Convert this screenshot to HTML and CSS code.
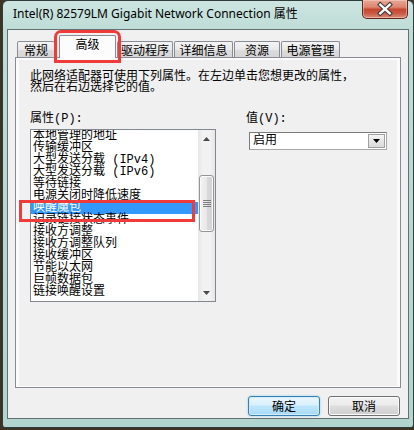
FILE: index.html
```html
<!DOCTYPE html>
<html lang="zh-CN">
<head>
  <meta charset="UTF-8" />
  <title>Intel(R) 82579LM Gigabit Network Connection 属性</title>
  <link rel="stylesheet" href="styles.css">
</head>
<body>

  <div class="window">
    <div class="titlebar">
      <span class="title">Intel(R) 82579LM Gigabit Network Connection 属性</span>
      <button class="close-btn" aria-label="关闭">
        <svg width="46" height="18" viewBox="0 0 46 18">
          <path d="M18 4.5 L28 13.5 M28 4.5 L18 13.5" stroke="#3b3b3b" stroke-width="4.6" stroke-linecap="square" fill="none"/>
          <path d="M18 4.5 L28 13.5 M28 4.5 L18 13.5" stroke="#ffffff" stroke-width="2.4" stroke-linecap="square" fill="none"/>
        </svg>
      </button>
    </div>

    <div class="client">
      <div class="tabs">
        <div class="tab tab-general">常规</div>
        <div class="tab tab-advanced active">高级</div>
        <div class="tab tab-driver">驱动程序</div>
        <div class="tab tab-details">详细信息</div>
        <div class="tab tab-resources">资源</div>
        <div class="tab tab-power">电源管理</div>
      </div>

      <div class="tab-panel">
        <div class="page">
          <p class="desc">此网络适配器可使用下列属性。在左边单击您想更改的属性，<br>然后在右边选择它的值。</p>

          <div class="props">
            <div class="col-left">
              <div class="field-label">属性(P):</div>
              <div class="listbox">
                <ul class="items">
                  <li>本地管理的地址</li>
                  <li>传输缓冲区</li>
                  <li>大型发送分载 (IPv4)</li>
                  <li>大型发送分载 (IPv6)</li>
                  <li>等待链接</li>
                  <li>电源关闭时降低速度</li>
                  <li class="selected">唤醒魔包</li>
                  <li>记录链接状态事件</li>
                  <li>接收方调整</li>
                  <li>接收方调整队列</li>
                  <li>接收缓冲区</li>
                  <li>节能以太网</li>
                  <li>巨帧数据包</li>
                  <li>链接唤醒设置</li>
                </ul>
                <div class="scrollbar">
                  <div class="arrow">
                    <svg width="7" height="4" viewBox="0 0 7 4"><path d="M0 4 L3.5 0 L7 4 Z" fill="#4a4a4a"/></svg>
                  </div>
                  <div class="track">
                    <div class="thumb">
                      <svg width="8" height="8" viewBox="0 0 8 8">
                        <path d="M0 0.5 H8 M0 2.5 H8 M0 4.5 H8 M0 6.5 H8" stroke="#7d7d7d" stroke-width="1"/>
                      </svg>
                    </div>
                  </div>
                  <div class="arrow">
                    <svg width="7" height="4" viewBox="0 0 7 4"><path d="M0 0 L7 0 L3.5 4 Z" fill="#4a4a4a"/></svg>
                  </div>
                </div>
              </div>
            </div>

            <div class="col-right">
              <div class="field-label">值(V):</div>
              <div class="combo">
                <span class="combo-text">启用</span>
                <span class="combo-btn">
                  <svg width="7" height="4" viewBox="0 0 7 4"><path d="M0 0 L7 0 L3.5 4 Z" fill="#000"/></svg>
                </span>
              </div>
            </div>
          </div>

          <div class="mark-item"></div>
        </div>
      </div>

      <div class="actions">
        <button class="btn btn-default">确定</button>
        <button class="btn">取消</button>
      </div>
    </div>
  </div>

</body>
</html>
```

FILE: styles.css
```css
* {
  box-sizing: border-box;
  margin: 0;
  padding: 0;
}

body {
  background-color: #3b3425;
  height: 430px;
  overflow: hidden;
  font-family: "Liberation Mono", "Noto Sans CJK SC", monospace;
  font-size: 12px;
  color: #000;
}

/* window frame */
.window {
  margin-left: 2px;
  width: 412px;
  height: 428px;
  border: 1px solid #2f3c3a;
  border-radius: 6px 6px 3px 3px;
  padding: 0 4px 8px 4px;
  background: linear-gradient(180deg, #cde5e1 0, #bddcd6 30px, #b2d5cf 100%);
}

.titlebar {
  height: 28px;
  display: flex;
  justify-content: space-between;
  align-items: flex-start;
}

.title {
  padding: 5px 0 0 6px;
  font-family: "Noto Sans", "Noto Sans CJK SC", sans-serif;
  font-size: 12px;
  line-height: 16px;
  color: #000;
}

.close-btn {
  width: 46px;
  height: 19px;
  margin: -1px 1px 0 0;
  border: 1px solid #5b2a22;
  border-top: none;
  border-radius: 0 0 5px 5px;
  background: linear-gradient(180deg, #e9a896 0, #dd8470 40%, #c6472f 52%, #c95a45 75%, #de8f7c 100%);
  box-shadow: inset 0 0 0 1px rgba(255, 220, 210, 0.45);
  display: flex;
  align-items: center;
  justify-content: center;
}

.close-btn svg {
  display: block;
}

.client {
  height: 390px;
  border: 1px solid #62716f;
  background-color: #f0f0f0;
  padding: 0 7px 0 7px;
}

/* tabs */
.tabs {
  height: 27px;
  display: flex;
  align-items: flex-end;
  gap: 1px;
  padding-left: 2px;
}

.tab {
  height: 16px;
  padding-top: 1px;
  border: 1px solid #898c95;
  border-bottom: none;
  border-radius: 2px 2px 0 0;
  background: linear-gradient(180deg, #f4f4f4 0, #e9e9e9 50%, #dcdcdc 51%, #d6d6d6 100%);
  font-family: "Noto Sans CJK SC", sans-serif;
  font-size: 12px;
  line-height: 14px;
  text-align: center;
}

.tab.active {
  position: relative;
  z-index: 1;
  height: 23px;
  margin-bottom: -1px;
  margin-left: 3px;
  background: #fcfcfc;
  outline: 3px solid #f03b3b;
  outline-offset: 2px;
}

.tab-general { width: 38px; }
.tab-advanced { width: 57px; }
.tab-driver { width: 56px; }
.tab-details { width: 59px; }
.tab-resources { width: 46px; }
.tab-power { width: 59px; }

.tab-panel {
  height: 331px;
  border: 1px solid #898c95;
  background-color: #fbfbfb;
  padding: 2px 3px 1px 3px;
}

.page {
  position: relative;
  height: 100%;
  background-color: #f0f0f0;
  padding: 12px 0 0 11px;
}

.desc {
  line-height: 11px;
}

.props {
  display: flex;
  gap: 30px;
  margin-top: 19px;
}

.field-label {
  line-height: 13px;
  height: 13px;
}

.col-left {
  width: 186px;
}

.listbox {
  margin-top: 3px;
  height: 173px;
  border: 1px solid #828790;
  background-color: #fff;
  display: flex;
}

.items {
  flex: 1;
  list-style: none;
  overflow: hidden;
}

.items li {
  height: 12px;
  line-height: 12px;
  padding-left: 2px;
  white-space: nowrap;
}

.items li.selected {
  background-color: #3399ff;
  color: #fff;
}

.scrollbar {
  width: 17px;
  display: flex;
  flex-direction: column;
  background: linear-gradient(90deg, #e6e6e6 0, #f2f2f2 30%, #f2f2f2 70%, #e6e6e6 100%);
}

.arrow {
  height: 17px;
  display: flex;
  align-items: center;
  justify-content: center;
}

.arrow svg,
.thumb svg,
.combo-btn svg {
  display: block;
}

.track {
  flex: 1;
}

.thumb {
  margin: 28px 1px 0 1px;
  height: 57px;
  border: 1px solid #959595;
  border-radius: 3px;
  background: linear-gradient(90deg, #f3f3f3 0, #e8e8e8 50%, #d9d9d9 51%, #d3d3d3 100%);
  box-shadow: inset 0 0 0 1px #fafafa;
  display: flex;
  align-items: center;
  justify-content: center;
}

.col-right {
  width: 141px;
}

.combo {
  margin: 6px 0 0 3px;
  width: 138px;
  height: 18px;
  border: 1px solid #7b7b7b;
  border-right-color: #a8a8a8;
  border-bottom-color: #a8a8a8;
  background-color: #fff;
  display: flex;
  justify-content: space-between;
  align-items: stretch;
  padding: 1px;
}

.combo-text {
  padding-left: 2px;
  line-height: 14px;
}

.combo-btn {
  width: 17px;
  border: 1px solid #a0a0a0;
  background: linear-gradient(180deg, #f6f6f6 0, #e6e6e6 50%, #dadada 100%);
  display: flex;
  align-items: center;
  justify-content: center;
}

/* red annotation round the chosen row */
.mark-item {
  position: absolute;
  left: 0;
  top: 140px;
  width: 176px;
  height: 22px;
  border: 3px solid #f03b3b;
}

/* bottom buttons */
.actions {
  display: flex;
  justify-content: flex-end;
  gap: 8px;
  margin: 8px 1px 0 0;
}

.btn {
  width: 72px;
  height: 20px;
  border: 1px solid #707070;
  border-radius: 3px;
  background: linear-gradient(180deg, #f2f2f2 0, #ebebeb 45%, #dddddd 50%, #cfcfcf 100%);
  box-shadow: inset 0 0 0 1px #fbfbfb;
  font-family: "Noto Sans CJK SC", sans-serif;
  font-size: 12px;
  line-height: 16px;
  color: #000;
}

.btn-default {
  border-color: #3c7fb1;
  background: linear-gradient(180deg, #eaf6fd 0, #d9f0fc 45%, #bee6fd 50%, #a7d9f5 100%);
  box-shadow: inset 0 0 0 1px #d0ecfb, 0 0 2px #7cc4ee;
}
```
